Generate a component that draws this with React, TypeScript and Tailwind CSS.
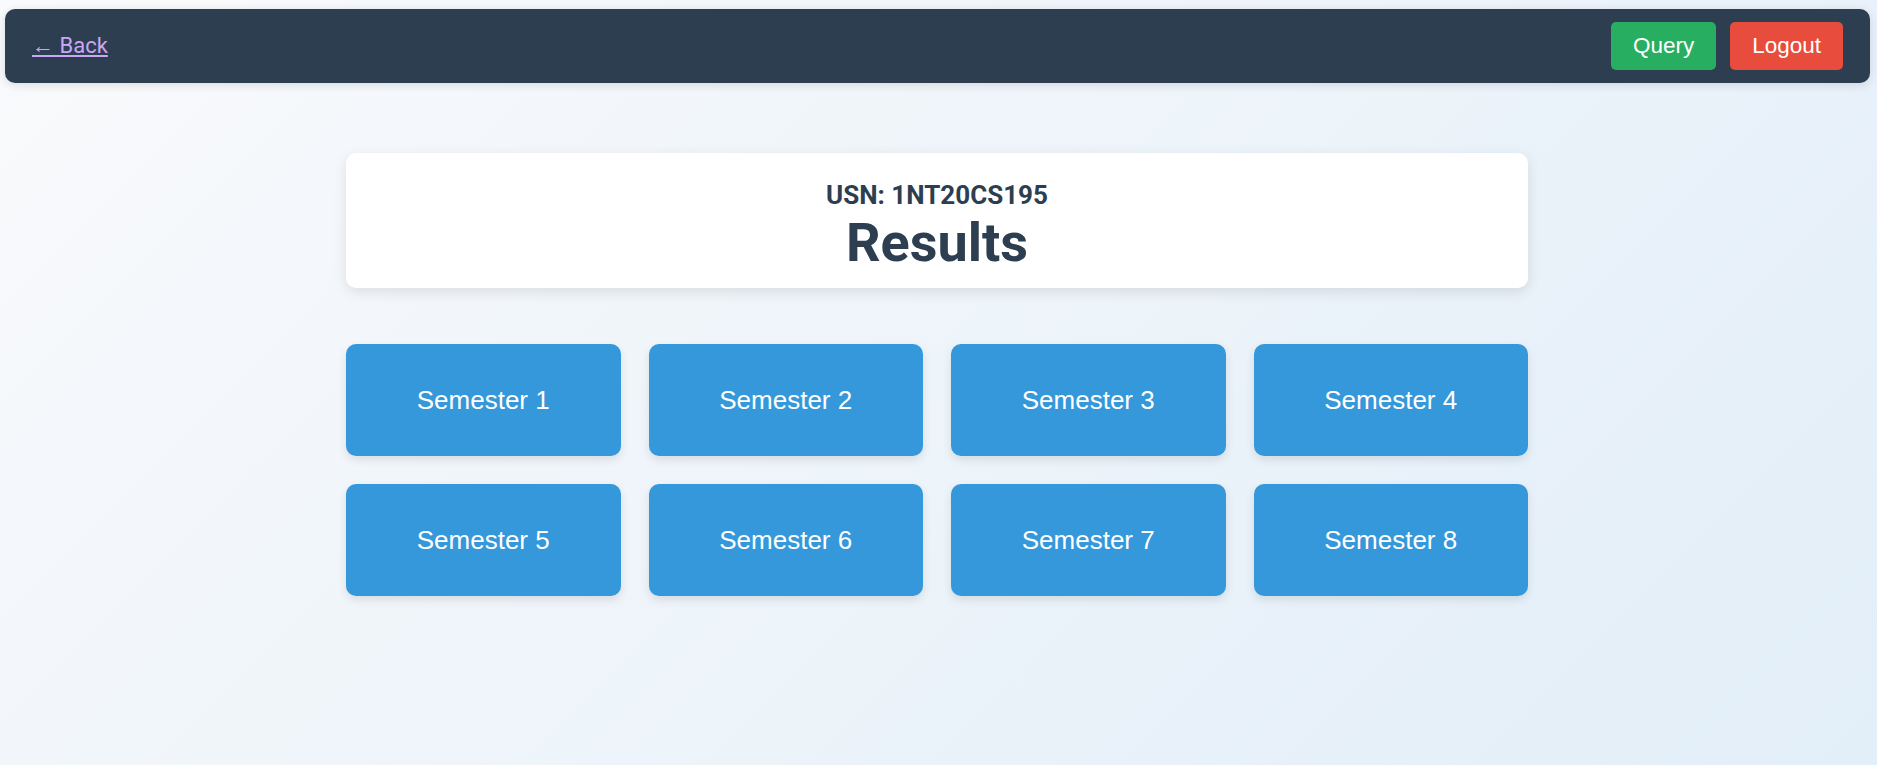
const SEMESTERS = [1, 2, 3, 4, 5, 6, 7, 8];

function Navbar() {
  return (
    <nav className="ml-[5px] mr-[7px] mt-[9px] h-[74px] flex items-center justify-between px-[27px] bg-[#2c3e50] rounded-[10px] shadow-[0_2px_10px_rgba(0,0,0,0.12)]">
      <a href="#" className="text-[22px] text-[#cba6f7] underline font-['Roboto',sans-serif] leading-none">
        ← Back
      </a>
      <div className="flex items-center gap-[14px]">
        <button className="h-[48px] px-[22px] rounded-[5px] bg-[#27ae60] text-white text-[22.5px] font-['Liberation_Sans',Arial,sans-serif]">
          Query
        </button>
        <button className="h-[48px] px-[22px] rounded-[5px] bg-[#e74c3c] text-white text-[22.5px] font-['Liberation_Sans',Arial,sans-serif]">
          Logout
        </button>
      </div>
    </nav>
  );
}

export default function App() {
  return (
    <div className="min-h-[765px] bg-linear-135 from-[#f9fafc] to-[#e2eef8] overflow-hidden pb-10">
      <Navbar />

      <main className="w-[1182px] ml-[346px] mt-[70px]">
        {/* Header card */}
        <div className="h-[135px] bg-white rounded-[10px] shadow-[0_4px_14px_rgba(0,0,0,0.1)] pt-[27px] text-center text-[#2c3e50] font-['Roboto',sans-serif]">
          <p className="text-[26px] leading-[30px] font-bold">USN: 1NT20CS195</p>
          <h1 className="text-[54px] leading-[60px] font-bold mt-[3px]">Results</h1>
        </div>

        {/* Semester grid */}
        <div className="grid grid-cols-4 gap-x-[28px] gap-y-[28px] mt-[56px]">
          {SEMESTERS.map((n) => (
            <button
              key={n}
              className="h-[112px] rounded-[10px] bg-[#3498db] text-white text-[26px] font-['Liberation_Sans',Arial,sans-serif] shadow-[0_4px_10px_rgba(0,0,0,0.1)]"
            >
              Semester {n}
            </button>
          ))}
        </div>
      </main>
    </div>
  );
}
